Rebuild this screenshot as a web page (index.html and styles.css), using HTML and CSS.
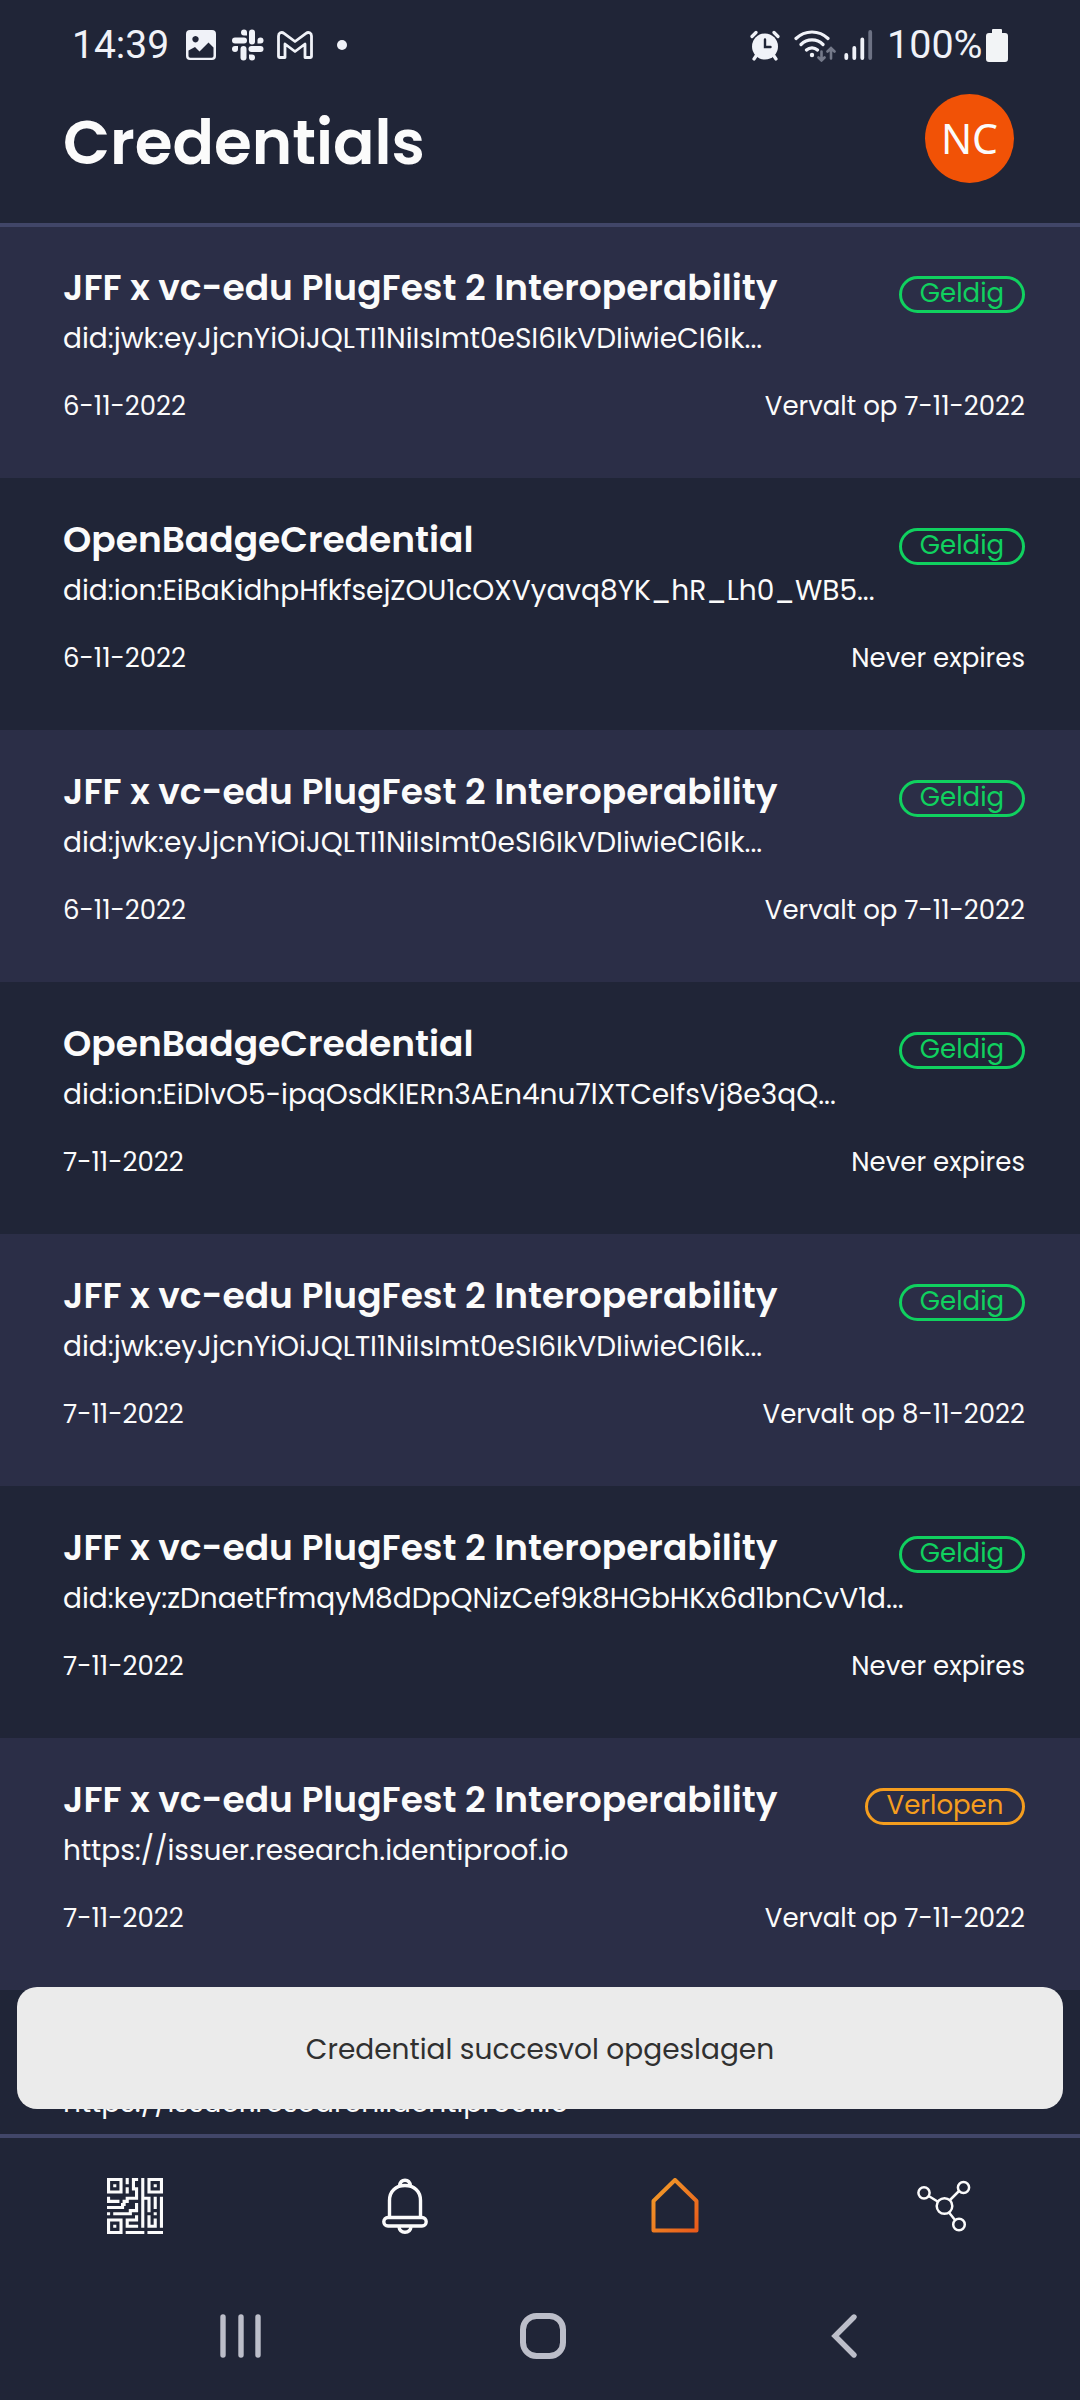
FILE: index.html
```
<!DOCTYPE html>
<html lang="nl">
<head>
<meta charset="utf-8">
<title>Credentials</title>
<link rel="stylesheet" href="styles.css">
</head>
<body>
<div class="screen">
  <div class="status">
    <span class="status-text">14:39</span>
    <svg class="i-image" width="30" height="30" viewBox="0 0 30 30"><path fill="#f0f2f8" fill-rule="evenodd" d="M4 0h22a4 4 0 0 1 4 4v22a4 4 0 0 1-4 4H4a4 4 0 0 1-4-4V4a4 4 0 0 1 4-4zM9.500 6a3.200 3.200 0 1 0 .01 0zM2.500 20.500V26q0 1.800 1.800 1.800h21.400q1.800 0 1.800-1.800v-8.500l-5-5-9 9-4.500-4.500z"/></svg>
    <svg class="i-slack" width="32" height="32" viewBox="0 0 32 32" fill="#f0f2f8"><rect x="0" y="8.500" width="15" height="6" rx="3"/><path d="M12 .5a3 3 0 0 1 3 3v3h-3a3 3 0 0 1 0-6z"/><rect x="17" y=".5" width="6" height="15" rx="3"/><path d="M31.500 11.500a3 3 0 0 1-3 3h-3v-3a3 3 0 0 1 6 0z"/><rect x="16.500" y="17" width="15" height="6" rx="3"/><path d="M20 31.500a3 3 0 0 1-3-3v-3h3a3 3 0 0 1 0 6z"/><rect x="8.500" y="17" width="6" height="14.500" rx="3"/><path d="M0 20a3 3 0 0 1 3-3h3v3a3 3 0 0 1-6 0z"/></svg>
    <svg class="i-mail" width="36" height="28" viewBox="0 0 36 28" fill="none" stroke="#f0f2f8" stroke-width="2.800" stroke-linejoin="round"><path d="M1.500 5v20.500q0 1 1 1H8V13l10 7.500L28 13v13.500h5.500q1 0 1-1V5c0-3-3-4.500-5.500-2.700L18 10.500 7 2.300C4.500.5 1.500 2 1.500 5z"/></svg>
    <svg class="i-dot" width="10" height="10" viewBox="0 0 10 10"><circle cx="5" cy="5" r="5" fill="#f0f2f8"/></svg>
    <svg class="i-alarm" width="30" height="31" viewBox="0 0 30 31" fill="none" stroke="#f0f2f8" stroke-linecap="round"><circle cx="15" cy="16.500" r="13" fill="#f0f2f8" stroke="none"/><path stroke-width="3.200" d="M2 6.500 6 2.500M28 6.500l-4-4M6 26l-2 3M24 26l2 3"/><path stroke="#202537" stroke-width="2.400" d="M15 9.500V17h5.500"/></svg>
    <svg class="i-wifi" width="42" height="33" viewBox="0 0 42 33" fill="none" stroke="#f0f2f8" stroke-width="3.200" stroke-linecap="round"><path d="M2 9.500a23 23 0 0 1 32 0M7 15.500a15.500 15.500 0 0 1 22 0M12.500 21a8 8 0 0 1 11 0"/><circle cx="18" cy="26" r="2.200" fill="#f0f2f8" stroke="none"/><g stroke="#747989" stroke-width="2.600"><path d="M27.500 22.500v9M24.500 28.500l3 3 3-3M37 29.500V20M33.500 22.500l3.500-3.500 3.500 3.500"/></g></svg>
    <svg class="i-signal" width="29" height="30" viewBox="0 0 29 30" stroke-width="3.800" stroke-linecap="round" stroke="#f0f2f8"><path d="M2.300 25v3M10.300 18v10M18.300 9.500V28"/><path stroke="#6d7284" d="M26.200 2v26"/></svg>
    <span class="status-text pct">100%</span>
    <svg class="i-batt" width="22" height="33" viewBox="0 0 22 33"><path fill="#f2f4f6" d="M6 1q0-1 1-1h8q1 0 1 1v3h3q3 0 3 3v23q0 3-3 3H3q-3 0-3-3V7q0-3 3-3h3z"/></svg>
  </div>
  <header class="header">
    <h1>Credentials</h1>
    <div class="avatar">NC</div>
  </header>
  <main class="list">
    <section class="card alt first">
      <div class="head"><h2>JFF x vc-edu PlugFest 2 Interoperability</h2><span class="badge">Geldig</span></div>
      <p class="issuer">did:jwk:eyJjcnYiOiJQLTI1NiIsImt0eSI6IkVDIiwieCI6Ik...</p>
      <div class="dates"><span>6-11-2022</span><span>Vervalt op 7-11-2022</span></div>
    </section>
    <section class="card">
      <div class="head"><h2>OpenBadgeCredential</h2><span class="badge">Geldig</span></div>
      <p class="issuer">did:ion:EiBaKidhpHfkfsejZOU1cOXVyavq8YK_hR_Lh0_WB5...</p>
      <div class="dates"><span>6-11-2022</span><span>Never expires</span></div>
    </section>
    <section class="card alt">
      <div class="head"><h2>JFF x vc-edu PlugFest 2 Interoperability</h2><span class="badge">Geldig</span></div>
      <p class="issuer">did:jwk:eyJjcnYiOiJQLTI1NiIsImt0eSI6IkVDIiwieCI6Ik...</p>
      <div class="dates"><span>6-11-2022</span><span>Vervalt op 7-11-2022</span></div>
    </section>
    <section class="card">
      <div class="head"><h2>OpenBadgeCredential</h2><span class="badge">Geldig</span></div>
      <p class="issuer">did:ion:EiDlvO5-ipqOsdKlERn3AEn4nu7lXTCeIfsVj8e3qQ...</p>
      <div class="dates"><span>7-11-2022</span><span>Never expires</span></div>
    </section>
    <section class="card alt">
      <div class="head"><h2>JFF x vc-edu PlugFest 2 Interoperability</h2><span class="badge">Geldig</span></div>
      <p class="issuer">did:jwk:eyJjcnYiOiJQLTI1NiIsImt0eSI6IkVDIiwieCI6Ik...</p>
      <div class="dates"><span>7-11-2022</span><span>Vervalt op 8-11-2022</span></div>
    </section>
    <section class="card">
      <div class="head"><h2>JFF x vc-edu PlugFest 2 Interoperability</h2><span class="badge">Geldig</span></div>
      <p class="issuer">did:key:zDnaetFfmqyM8dDpQNizCef9k8HGbHKx6d1bnCvV1d...</p>
      <div class="dates"><span>7-11-2022</span><span>Never expires</span></div>
    </section>
    <section class="card alt">
      <div class="head"><h2>JFF x vc-edu PlugFest 2 Interoperability</h2><span class="badge expired">Verlopen</span></div>
      <p class="issuer">https://issuer.research.identiproof.io</p>
      <div class="dates"><span>7-11-2022</span><span>Vervalt op 7-11-2022</span></div>
    </section>
    <section class="card last">
      <p class="issuer">https://issuer.research.identiproof.io</p>
    </section>
    <div class="toast">Credential succesvol opgeslagen</div>
  </main>
  <nav class="tabs">
    <div class="tab"><svg width="56" height="56" viewBox="0 0 18 18" fill="none" stroke="#fbfbfb" stroke-width="1"><path d="M.5.5h4v4h-4zM13.500.5h4v4h-4zM.5 13.500h4v4h-4z"/><path d="M2 2.500h1M15 2.500h1M2 15.500h1M6.500 0v2M6.500 3v2M10 .5H8.500v3h1v3h-3v1h-1v1H5v1H0M.5 6v1.500H4M0 11.500h1M2 11.500h5.500v-1h2V8M7.500 11v-1M9.500 12v1.500h-3v2H10M11.500 0v16M11.500 6.500h2V11M15.500 6v4M17.500 6v10M15.500 11v1M13.500 12v3.500h2V13M6 17.500h6M13 17.500h5"/></svg></div>
    <div class="tab"><svg width="46" height="56" viewBox="0 0 46 56" fill="none" stroke="#fbfbfb" stroke-width="3.400"><path d="M7.500 39V22.500C7.500 13 14 7.500 23 7.500S38.500 13 38.500 22.500V39M17.500 8c.5-3.500 2.500-5.700 5.500-5.700S28 4.500 28.500 8M17 49c.5 3.500 3 5.200 6 5.200s5.500-1.700 6-5.200"/><rect x="1.800" y="39.500" width="42.400" height="8.500" rx="4.200"/></svg></div>
    <div class="tab"><svg width="48" height="56" viewBox="0 0 48 56" fill="none"><defs><linearGradient id="home" x1="0" y1="0" x2="1" y2="1"><stop offset="0" stop-color="#f2a02a"/><stop offset="1" stop-color="#e95a1a"/></linearGradient></defs><path d="M2.500 52.500V23L24 2 45.500 23v29.500z" stroke="url(#home)" stroke-width="4" stroke-linejoin="round"/></svg></div>
    <div class="tab"><svg width="56" height="56" viewBox="0 0 56 56" fill="none" stroke="#fbfbfb" stroke-width="2.500"><circle cx="27.500" cy="28" r="7.800"/><circle cx="7" cy="14.800" r="5.600"/><circle cx="46.500" cy="9.500" r="5.600"/><circle cx="42" cy="46.500" r="5.800"/><path d="M11.700 18 21 23.700M42 13l-9 9M32 34.500l6 7.500"/></svg></div>
  </nav>
  <div class="system">
    <svg class="s-recent" width="42" height="46" viewBox="0 0 42 46" stroke="#bcbec9" stroke-width="5.400" stroke-linecap="round"><path d="M3 4v38M21 4v38M38 4v38"/></svg>
    <svg class="s-home" width="46" height="46" viewBox="0 0 46 46" fill="none" stroke="#bcbec9" stroke-width="6"><rect x="3" y="3" width="40" height="40" rx="13.500"/></svg>
    <svg class="s-back" width="27" height="46" viewBox="0 0 27 46" fill="none" stroke="#bcbec9" stroke-width="5.400" stroke-linecap="round"><path d="M23 4 4 23l19 19"/></svg>
  </div>
</div>
</body>
</html>
```
FILE: styles.css
```
* { box-sizing: border-box; margin: 0; padding: 0; }
body {
  width: 1080px;
  background: #202537;
  color: #fbfbfb;
  font-family: Poppins, Inter, "Open Sans", sans-serif;
}
svg { display: block; flex: none; }
.screen { height: 2400px; display: flex; flex-direction: column; overflow: hidden; }

.status { height: 90px; padding-left: 72px; display: flex; align-items: center; flex: none; }
.status-text { font: 400 39px/46px Roboto, sans-serif; color: #f0f2f8; width: 94px; white-space: nowrap; }
.i-image { margin-left: 20px; }
.i-slack { margin-left: 16px; }
.i-mail { margin-left: 13px; }
.i-dot { margin-left: 24px; }
.i-alarm { margin-left: 403px; }
.i-wifi { margin-left: 14px; }
.i-signal { margin-left: 8px; }
.pct { margin-left: 14px; font-size: 39.500px; }
.i-batt { margin-left: 5px; }

.header {
  height: 137px;
  border-bottom: 4px solid #414668;
  padding: 0 66px 0 63px;
  display: flex;
  justify-content: space-between;
  align-items: flex-start;
  flex: none;
}
h1 { margin-top: 13px; font-size: 61.200px; line-height: 80px; font-weight: 600; }
.avatar {
  width: 89px;
  height: 89px;
  margin-top: 4px;
  border-radius: 50%;
  background: #f15206;
  font: 400 41px/89px "Noto Sans", sans-serif;
  text-align: center;
}

.list { position: relative; height: 1907px; overflow: hidden; flex: none; }
.card { height: 252px; padding: 39px 55px 0 63px; }
.card.first { height: 251px; padding-top: 38px; }
.card.alt { background: #2b2e47; }
.card.last { padding-top: 92px; }
.head { height: 44px; display: flex; justify-content: space-between; align-items: flex-start; }
h2 { font-size: 36px; line-height: 46px; font-weight: 600; white-space: nowrap; }
.badge {
  width: 126px;
  height: 37px;
  margin-top: 11px;
  border: 3px solid #10d15f;
  border-radius: 19px;
  color: #10d15f;
  font-size: 26px;
  line-height: 28px;
  text-align: center;
}
.badge.expired { width: 160px; color: #f59d1e; border-color: #f59d1e; }
.issuer { margin-top: 9px; font-size: 28px; line-height: 42px; height: 40px; white-space: nowrap; }
.last .issuer { margin-top: 0; }
.dates { margin-top: 30px; display: flex; justify-content: space-between; font-size: 26px; line-height: 37px; }
.toast {
  position: absolute;
  left: 17px;
  right: 17px;
  top: 1760px;
  height: 122px;
  border-radius: 20px;
  background: #ebebeb;
  color: #303030;
  font-size: 28px;
  line-height: 125px;
  text-align: center;
}

.tabs {
  height: 144px;
  border-top: 4px solid #414668;
  padding-top: 40px;
  display: grid;
  grid-template-columns: repeat(4, 1fr);
  flex: none;
}
.tab { display: flex; justify-content: center; }
.system { padding: 35px 0 0 220px; display: flex; align-items: flex-start; }
.s-home { margin-left: 258px; }
.s-back { margin-left: 265px; }
```
